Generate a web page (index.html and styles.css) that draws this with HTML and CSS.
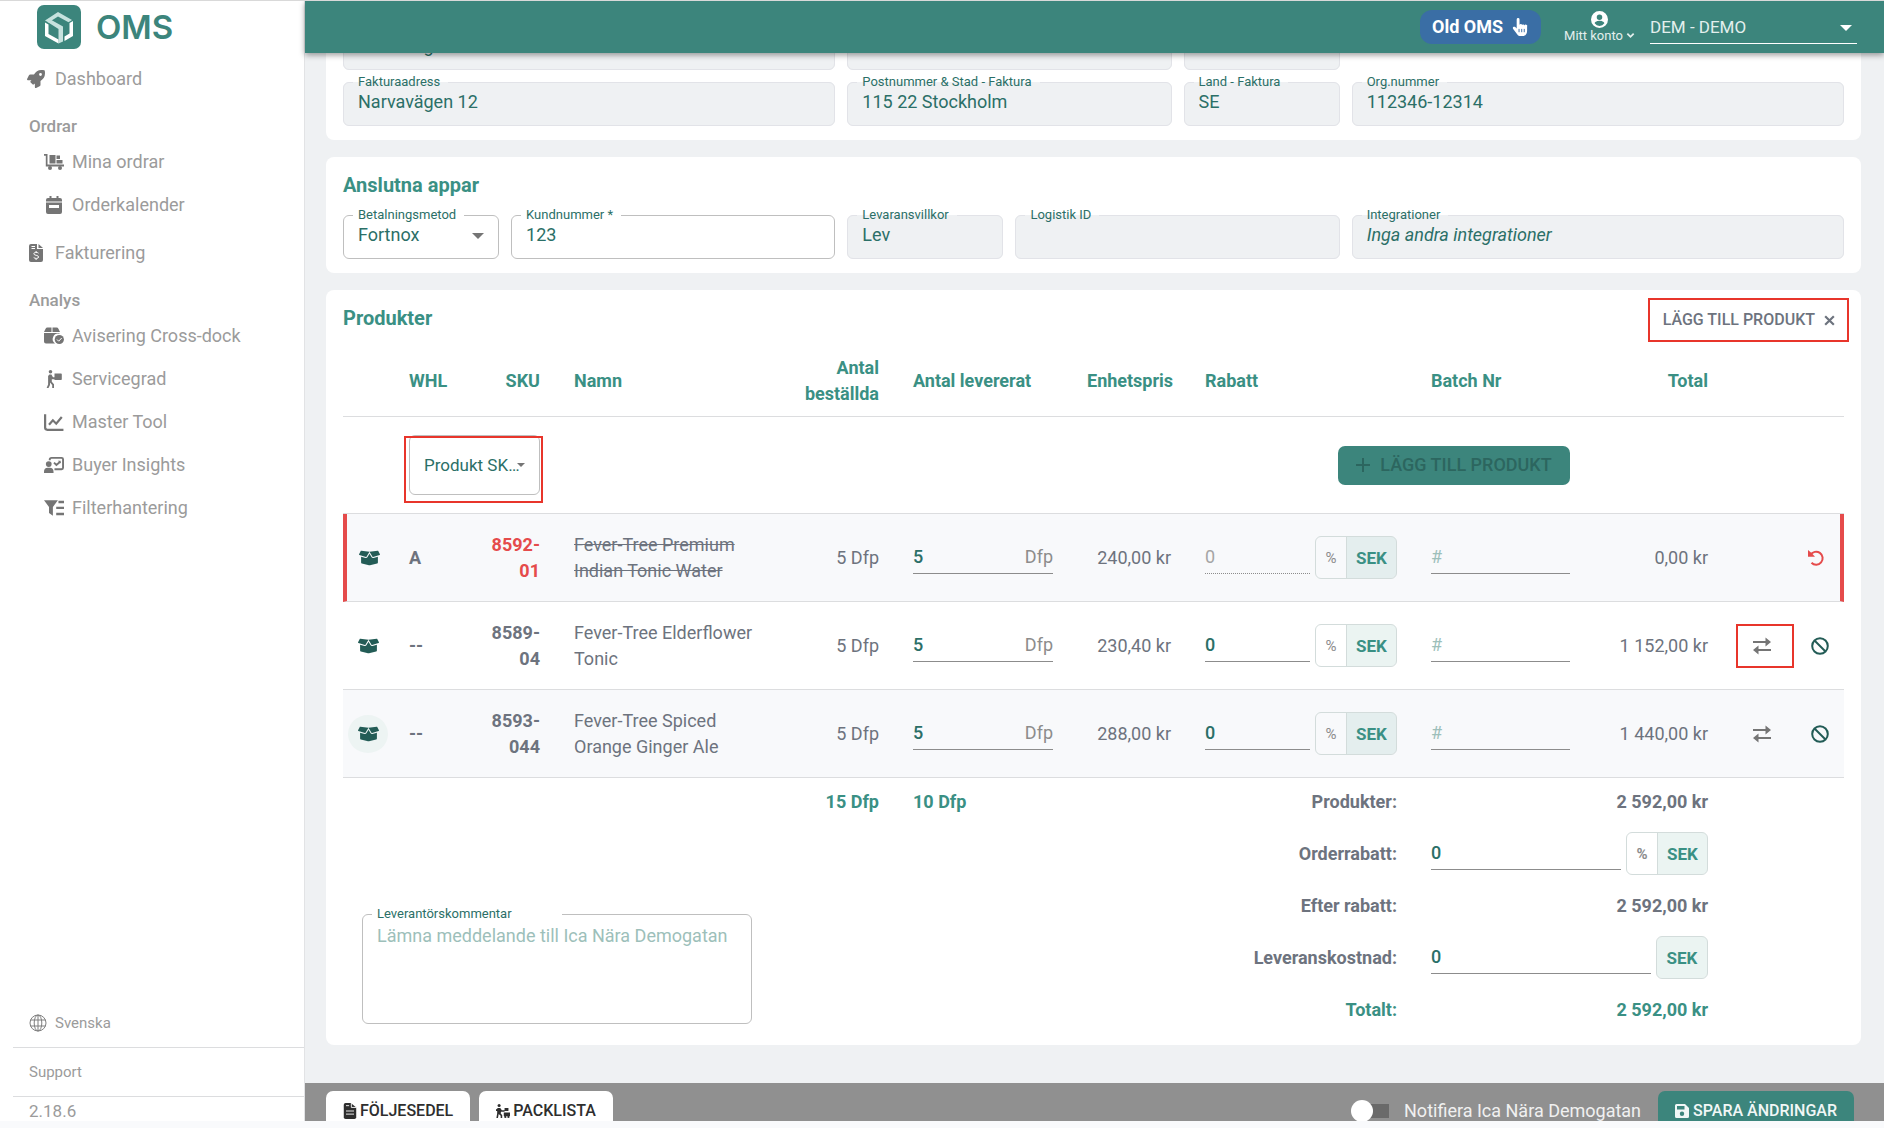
FILE: index.html
```html
<!DOCTYPE html>
<html lang="sv">
<head>
  <meta charset="utf-8">
  <meta name="viewport" content="width=device-width, initial-scale=1">
  <title>OMS - Order</title>
  <link rel="stylesheet" href="styles.css">
</head>
<body>

<svg class="sprite" aria-hidden="true">
  <symbol id="i-rocket" viewBox="0 0 512 512"><path d="M505.1 19.1c-1.2-5.5-6.700-11-12.200-12.200C460.700 0 435.500 0 410.400 0 307.200 0 245.300 55.200 199.100 128H94.800c-16.300 0-35.600 11.900-42.900 26.500L2.500 253.300A28.400 28.400 0 0 0 0 264a24 24 0 0 0 24 24h103.800l-22.500 22.500c-11.400 11.400-13 32.300 0 45.200l50.900 50.900c11.200 11.200 32.200 13.200 45.300 0l22.500-22.500V488a24 24 0 0 0 24 24 28.600 28.600 0 0 0 10.700-2.500l98.700-49.400c14.600-7.300 26.500-26.500 26.500-42.900V312.800c72.600-46.300 128-108.400 128-211.100 .2-25.200 .2-50.400-6.800-82.600ZM384 168a40 40 0 1 1 40-40 40 40 0 0 1-40 40Z"/></symbol>
  <symbol id="i-cart" viewBox="0 0 20 16"><path d="M0 0h3.500v10.500H20v2H1.800V1.800H0zM5.500 1h6v8.500h-6zM12.500 1.500H16V5h-3.500zM12.500 6h6v3.500h-6z"/><circle cx="6" cy="14" r="2"/><circle cx="16" cy="14" r="2"/></symbol>
  <symbol id="i-calendar" viewBox="0 0 16 18"><path fill-rule="evenodd" d="M3.500 0h2v2h5V0h2v2H14a2 2 0 0 1 2 2v1.500H0V4a2 2 0 0 1 2-2h1.500zM0 6.500h16V16a2 2 0 0 1-2 2H2a2 2 0 0 1-2-2zM3 9v3h10V9z"/></symbol>
  <symbol id="i-invoice" viewBox="0 0 14 18"><path d="M2 0h6v5h6v11a2 2 0 0 1-2 2H2a2 2 0 0 1-2-2V2a2 2 0 0 1 2-2zM9.500 0L14 4H9.500z"/><path class="cut" d="M2.500 2.500h3.500M2.500 4.500h3.500M9.500 9.200C8.500 8 4.800 8 4.800 9.800c0 2 4.800 1 4.800 3.200 0 1.800-3.800 1.800-4.900.5M7.100 7v1.500M7.100 14.500V16"/></symbol>
  <symbol id="i-boxcheck" viewBox="0 0 20 17"><path d="M3.500 0h4v4.500H0L1.600 1.200A2 2 0 0 1 3.500 0zM8.500 0h4a2 2 0 0 1 1.900 1.200L16 4.500H8.500zM0 5.500h15.500v.7a5.500 5.500 0 0 0-4.500 9.800H2a2 2 0 0 1-2-2z"/><circle cx="15.300" cy="12" r="4.600"/><path class="cut" d="M13 12l1.700 1.700 3-3.200"/></symbol>
  <symbol id="i-carry" viewBox="0 0 16 18"><circle cx="4.500" cy="1.800" r="1.800"/><path d="M8.500 3.500H15a.8.800 0 0 1 .8.800v4.900a.8.800 0 0 1-.8.800H8.500zM3.400 4.500h2L7 7.300h2v1.900H5.800v2.500L8 14.200V18H6.200v-3L4 12.500V15l-1.500 3H.6l1.500-3.500V6z"/></symbol>
  <symbol id="i-chart" viewBox="0 0 18 16"><path class="line" d="M1 1v12a2 2 0 0 0 2 2h14.500M4.500 10.500L8 6.500l3 3L16 3.500"/></symbol>
  <symbol id="i-teacher" viewBox="0 0 21 17"><path class="line" d="M6 3.500V3a2 2 0 0 1 2-2h10.500a1.500 1.500 0 0 1 1.500 1.500v9a1.500 1.500 0 0 1-1.500 1.500H11M10.500 6l2.500 2.500L17 5"/><circle cx="5" cy="7.500" r="3"/><path d="M0 17v-1.500a4 4 0 0 1 4-4h2a4 4 0 0 1 4 4V17zM14.500 4h3v3z"/></symbol>
  <symbol id="i-filter" viewBox="0 0 18 14"><path d="M0 0h12.500L8 6v8l-3.500-2.500V6zM13 .5h5v2.200h-5zM11 5.800h7V8h-7zM11 11.300h7v2.200h-7z"/></symbol>
  <symbol id="i-globe" viewBox="0 0 18 18"><g class="thin"><circle cx="9" cy="9" r="8"/><ellipse cx="9" cy="9" rx="3.800" ry="8"/><path d="M9 1v16M1.500 6h15M1.500 12h15"/></g></symbol>
  <symbol id="i-hand" viewBox="0 0 16 19"><path d="M4.500 1.500a1.500 1.500 0 0 1 3 0V7a1.500 1.500 0 0 1 2.700.2 1.500 1.500 0 0 1 2.500.6A1.500 1.500 0 0 1 15.500 9v4.500c0 3-1.500 5.500-4.500 5.500H8.500c-1.500 0-2.500-.6-3.300-1.700L.8 11.500c-1.200-1.700.8-3.200 2.200-1.900l1.500 1.500z"/><path class="cut" d="M7 11.500v3.500M9.800 11.500v3.500M12.500 11.500v3.500"/></symbol>
  <symbol id="i-user" viewBox="0 0 20 20"><path fill-rule="evenodd" d="M10 0a10 10 0 1 0 0 20 10 10 0 0 0 0-20zm0 4a3.200 3.200 0 1 1 0 6.500A3.200 3.200 0 0 1 10 4zm0 13.500a7 7 0 0 1-5.700-3c0-1.900 3.800-2.900 5.700-2.900s5.700 1 5.700 2.900a7 7 0 0 1-5.700 3z"/></symbol>
  <symbol id="i-chevron" viewBox="0 0 10 10"><path class="line" d="M1.500 3L5 6.500 8.500 3"/></symbol>
  <symbol id="i-close" viewBox="0 0 12 12"><path class="line" d="M2 2l8 8M10 2l-8 8"/></symbol>
  <symbol id="i-plus" viewBox="0 0 14 14"><path class="line" d="M7 0v14M0 7h14"/></symbol>
  <symbol id="i-box" viewBox="0 0 640 512"><path d="M425.700 256c-16.900 0-32.800-9-41.400-23.400L320 126l-64.200 106.600c-8.700 14.500-24.600 23.500-41.500 23.500-4.500 0-9-.6-13.300-1.900L64 215v178c0 14.700 10 27.500 24.200 31l216.200 54.100c10.200 2.500 20.900 2.500 31 0L551.800 424c14.200-3.600 24.200-16.400 24.200-31V215l-137 39.100c-4.300 1.300-8.800 1.900-13.300 1.900zm212.600-112.200L586.800 41c-3.100-6.200-9.800-9.800-16.700-8.900L320 64l91.700 152.100c3.800 6.300 11.400 9.300 18.500 7.300l197.900-56.500c9.900-2.900 14.700-13.900 10.200-23.100zM53.200 41L1.700 143.800c-4.600 9.200.3 20.200 10.100 23l197.900 56.500c7.100 2 14.700-1 18.500-7.300L320 64 69.800 32.100c-6.900-.8-13.500 2.700-16.600 8.900z"/></symbol>
  <symbol id="i-swap" viewBox="0 0 18 18"><path class="line" d="M0 5h14M4 13h14"/><path d="M12.500 .5L18 5l-5.500 4.500zM5.500 8.500L0 13l5.500 4.500z"/></symbol>
  <symbol id="i-ban" viewBox="0 0 18 18"><path class="line" d="M3.500 3.500l11 11"/><circle class="line" cx="9" cy="9" r="7.800"/></symbol>
  <symbol id="i-undo" viewBox="0 0 16 16"><path class="line" d="M2.500 5A6.500 6.500 0 1 1 3.500 12.800"/><path d="M0 0l1.800 1.500L3.500 3l3.500 3.800H0z"/></symbol>
  <symbol id="i-note" viewBox="0 0 14 18"><path d="M2 0h6l6 5v11a2 2 0 0 1-2 2H2a2 2 0 0 1-2-2V2a2 2 0 0 1 2-2z"/><path class="cut" d="M8.500 0v5H14M2.500 3H6M2.500 9h9M2.500 12.500h9"/></symbol>
  <symbol id="i-pack" viewBox="0 0 18 18"><circle cx="4" cy="2" r="2"/><path d="M2.500 5h3l2 3H11v2H6.500l-.5 2 2 2.500V18H6v-3l-2.500-2-1 5H.5l1-6V9H0V7zM11 5h5v4h-5zM10 11h8v4.500h-8z"/><circle cx="12" cy="16.500" r="1.500"/><circle cx="16" cy="16.500" r="1.500"/></symbol>
  <symbol id="i-save" viewBox="0 0 14 14"><path fill-rule="evenodd" d="M1.500 0H10l4 4v8.500a1.500 1.500 0 0 1-1.500 1.500h-11A1.500 1.500 0 0 1 0 12.500v-11A1.500 1.500 0 0 1 1.500 0zM2 2v3.500h7.500V2zM7 7.500a2.200 2.200 0 1 0 0 4.400 2.200 2.200 0 0 0 0-4.400z"/></symbol>
</svg>

<div class="app">
  <aside class="sidebar">
    <a class="brand" href="#">
      <svg class="brand__logo" viewBox="0 0 44 44">
        <rect width="44" height="44" rx="7" fill="#3c857c"/>
        <path d="M8 15.500l13-8.500 14 8-3.500 2.200-10.500-5.700-9.500 6z" fill="#c6e2de"/>
        <path d="M13.500 14.500l12.500 7v15l-4.500 2V24l-11-7z" fill="#c6e2de"/>
        <path d="M8 17.500l3.500 2v9.500l10 5.500v4L8 31zM36 16v15l-8.500 5v-4.500l5-3V18z" fill="#fff"/>
      </svg>
      <span>OMS</span>
    </a>
    <nav class="nav">
      <a class="nav__item" href="#"><svg class="icon"><use href="#i-rocket"/></svg>Dashboard</a>
      <h2 class="nav__head">Ordrar</h2>
      <a class="nav__item nav__item--sub" href="#"><svg class="icon"><use href="#i-cart"/></svg>Mina ordrar</a>
      <a class="nav__item nav__item--sub" href="#"><svg class="icon"><use href="#i-calendar"/></svg>Orderkalender</a>
      <a class="nav__item nav__item--gap" href="#"><svg class="icon"><use href="#i-invoice"/></svg>Fakturering</a>
      <h2 class="nav__head">Analys</h2>
      <a class="nav__item nav__item--sub" href="#"><svg class="icon"><use href="#i-boxcheck"/></svg>Avisering Cross-dock</a>
      <a class="nav__item nav__item--sub" href="#"><svg class="icon"><use href="#i-carry"/></svg>Servicegrad</a>
      <a class="nav__item nav__item--sub" href="#"><svg class="icon"><use href="#i-chart"/></svg>Master Tool</a>
      <a class="nav__item nav__item--sub" href="#"><svg class="icon"><use href="#i-teacher"/></svg>Buyer Insights</a>
      <a class="nav__item nav__item--sub" href="#"><svg class="icon"><use href="#i-filter"/></svg>Filterhantering</a>
    </nav>
    <div class="sidebar__foot">
      <a class="nav__foot" href="#"><svg class="icon"><use href="#i-globe"/></svg>Svenska</a>
      <a class="nav__foot" href="#">Support</a>
      <span class="version">2.18.6</span>
    </div>
  </aside>

  <div class="main">
    <header class="topbar">
      <button class="old-btn" type="button">Old OMS <svg class="icon"><use href="#i-hand"/></svg></button>
      <button class="account" type="button">
        <svg class="account__icon"><use href="#i-user"/></svg>
        <span class="account__text">Mitt konto <svg class="chevron"><use href="#i-chevron"/></svg></span>
      </button>
      <div class="select select--top">
        <select aria-label="Leverantör"><option>DEM - DEMO</option></select>
      </div>
    </header>

    <main class="content">
      <section class="card card--address">
        <div class="fields">
          <fieldset class="field field--3 is-readonly">
            <legend><label for="lev-adress">Leveransadress</label></legend>
            <input id="lev-adress" type="text" value="Narvavägen 12" readonly>
          </fieldset>
          <fieldset class="field field--2 is-readonly">
            <legend><label for="lev-post">Postnummer &amp; Stad</label></legend>
            <input id="lev-post" type="text" value="115 22 Stockholm" readonly>
          </fieldset>
          <fieldset class="field is-readonly">
            <legend><label for="lev-land">Land</label></legend>
            <input id="lev-land" type="text" value="SE" readonly>
          </fieldset>
        </div>
        <div class="fields">
          <fieldset class="field field--3 is-readonly">
            <legend><label for="fak-adress">Fakturaadress</label></legend>
            <input id="fak-adress" type="text" value="Narvavägen 12" readonly>
          </fieldset>
          <fieldset class="field field--2 is-readonly">
            <legend><label for="fak-post">Postnummer &amp; Stad - Faktura</label></legend>
            <input id="fak-post" type="text" value="115 22 Stockholm" readonly>
          </fieldset>
          <fieldset class="field is-readonly">
            <legend><label for="fak-land">Land - Faktura</label></legend>
            <input id="fak-land" type="text" value="SE" readonly>
          </fieldset>
          <fieldset class="field field--3 is-readonly">
            <legend><label for="orgnr">Org.nummer</label></legend>
            <input id="orgnr" type="text" value="112346-12314" readonly>
          </fieldset>
        </div>
      </section>

      <section class="card card--apps">
        <h2 class="card__title">Anslutna appar</h2>
        <div class="fields">
          <fieldset class="field">
            <legend><label for="betalning">Betalningsmetod</label></legend>
            <div class="select">
              <select id="betalning"><option>Fortnox</option></select>
            </div>
          </fieldset>
          <fieldset class="field field--2">
            <legend><label for="kundnr">Kundnummer *</label></legend>
            <input id="kundnr" type="text" value="123">
          </fieldset>
          <fieldset class="field is-readonly">
            <legend><label for="levvillkor">Levaransvillkor</label></legend>
            <input id="levvillkor" type="text" value="Lev" readonly>
          </fieldset>
          <fieldset class="field field--2 is-readonly">
            <legend><label for="logistik">Logistik ID</label></legend>
            <input id="logistik" type="text" value="" readonly>
          </fieldset>
          <fieldset class="field field--3 is-readonly">
            <legend><label for="integrationer">Integrationer</label></legend>
            <input id="integrationer" class="italic" type="text" value="Inga andra integrationer" readonly>
          </fieldset>
        </div>
      </section>

      <section class="card card--products">
        <div class="card__head">
          <h2 class="card__title">Produkter</h2>
          <button class="add-toggle marked" type="button">LÄGG TILL PRODUKT <svg class="icon"><use href="#i-close"/></svg></button>
        </div>

        <table class="products">
          <colgroup>
            <col class="c-icon"><col class="c-whl"><col class="c-sku"><col class="c-name"><col class="c-ordered">
            <col class="c-delivered"><col class="c-price"><col class="c-discount"><col class="c-batch"><col class="c-total"><col class="c-actions">
          </colgroup>
          <thead>
            <tr>
              <th></th>
              <th>WHL</th>
              <th class="right">SKU</th>
              <th>Namn</th>
              <th class="right">Antal beställda</th>
              <th>Antal levererat</th>
              <th class="right">Enhetspris</th>
              <th>Rabatt</th>
              <th>Batch Nr</th>
              <th class="right">Total</th>
              <th></th>
            </tr>
          </thead>
          <tbody>
            <tr class="add-row">
              <td></td>
              <td colspan="2">
                <div class="select select--sku">
                  <select aria-label="Produkt SKU"><option>Produkt SK…</option></select>
                  <span class="mark"></span>
                </div>
              </td>
              <td colspan="3"></td>
              <td class="right" colspan="3">
                <button class="btn btn--add" type="button" disabled><svg class="icon"><use href="#i-plus"/></svg>LÄGG TILL PRODUKT</button>
              </td>
              <td colspan="2"></td>
            </tr>
            <tr class="item item--removed">
              <td class="box-cell"><button class="box-btn" type="button" aria-label="Visa lager"><svg class="icon"><use href="#i-box"/></svg></button></td>
              <td class="strong">A</td>
              <td class="strong right sku">8592-01</td>
              <td class="name">Fever-Tree Premium Indian Tonic Water</td>
              <td class="right">5 Dfp</td>
              <td><div class="line-input"><input type="text" value="5" aria-label="Antal levererat"><span>Dfp</span></div></td>
              <td class="right">240,00 kr</td>
              <td>
                <div class="discount">
                  <div class="line-input is-disabled"><input type="text" value="0" aria-label="Rabatt" disabled></div>
                  <div class="toggle"><button type="button">%</button><button class="on" type="button">SEK</button></div>
                </div>
              </td>
              <td><div class="line-input"><input type="text" placeholder="#" aria-label="Batch Nr"></div></td>
              <td class="right">0,00 kr</td>
              <td class="actions">
                <div class="actions__row">
                  <button class="act act--undo" type="button" aria-label="Ångra"><svg class="icon"><use href="#i-undo"/></svg></button>
                </div>
              </td>
            </tr>
            <tr class="item">
              <td class="box-cell"><button class="box-btn" type="button" aria-label="Visa lager"><svg class="icon"><use href="#i-box"/></svg></button></td>
              <td class="strong">--</td>
              <td class="strong right sku">8589-04</td>
              <td class="name">Fever-Tree Elderflower Tonic</td>
              <td class="right">5 Dfp</td>
              <td><div class="line-input"><input type="text" value="5" aria-label="Antal levererat"><span>Dfp</span></div></td>
              <td class="right">230,40 kr</td>
              <td>
                <div class="discount">
                  <div class="line-input"><input type="text" value="0" aria-label="Rabatt"></div>
                  <div class="toggle"><button type="button">%</button><button class="on" type="button">SEK</button></div>
                </div>
              </td>
              <td><div class="line-input"><input type="text" placeholder="#" aria-label="Batch Nr"></div></td>
              <td class="right">1 152,00 kr</td>
              <td class="actions">
                <div class="actions__row">
                  <button class="act act--swap marked" type="button" aria-label="Byt produkt"><svg class="icon"><use href="#i-swap"/></svg></button>
                  <button class="act" type="button" aria-label="Ta bort"><svg class="icon"><use href="#i-ban"/></svg></button>
                </div>
              </td>
            </tr>
            <tr class="item">
              <td class="box-cell"><button class="box-btn is-hover" type="button" aria-label="Visa lager"><svg class="icon"><use href="#i-box"/></svg></button></td>
              <td class="strong">--</td>
              <td class="strong right sku">8593-044</td>
              <td class="name">Fever-Tree Spiced Orange Ginger Ale</td>
              <td class="right">5 Dfp</td>
              <td><div class="line-input"><input type="text" value="5" aria-label="Antal levererat"><span>Dfp</span></div></td>
              <td class="right">288,00 kr</td>
              <td>
                <div class="discount">
                  <div class="line-input"><input type="text" value="0" aria-label="Rabatt"></div>
                  <div class="toggle"><button type="button">%</button><button class="on" type="button">SEK</button></div>
                </div>
              </td>
              <td><div class="line-input"><input type="text" placeholder="#" aria-label="Batch Nr"></div></td>
              <td class="right">1 440,00 kr</td>
              <td class="actions">
                <div class="actions__row">
                  <button class="act act--swap" type="button" aria-label="Byt produkt"><svg class="icon"><use href="#i-swap"/></svg></button>
                  <button class="act" type="button" aria-label="Ta bort"><svg class="icon"><use href="#i-ban"/></svg></button>
                </div>
              </td>
            </tr>
          </tbody>
          <tfoot>
            <tr class="sum">
              <td colspan="4"></td>
              <td class="right green">15 Dfp</td>
              <td class="green">10 Dfp</td>
              <td class="right" colspan="2">Produkter:</td>
              <td class="right" colspan="2">2 592,00 kr</td>
              <td></td>
            </tr>
            <tr class="sum sum--input">
              <td class="comment-cell" colspan="4" rowspan="4">
                <fieldset class="field field--comment">
                  <legend><label for="kommentar">Leverantörskommentar</label></legend>
                  <textarea id="kommentar" placeholder="Lämna meddelande till Ica Nära Demogatan"></textarea>
                </fieldset>
              </td>
              <td colspan="2"></td>
              <td class="right" colspan="2"><label for="orderrabatt">Orderrabatt:</label></td>
              <td colspan="2">
                <div class="discount">
                  <div class="line-input"><input id="orderrabatt" type="text" value="0"></div>
                  <div class="toggle"><button type="button">%</button><button class="on" type="button">SEK</button></div>
                </div>
              </td>
              <td></td>
            </tr>
            <tr class="sum">
              <td colspan="2"></td>
              <td class="right" colspan="2">Efter rabatt:</td>
              <td class="right" colspan="2">2 592,00 kr</td>
              <td></td>
            </tr>
            <tr class="sum sum--input">
              <td colspan="2"></td>
              <td class="right" colspan="2"><label for="leverans">Leveranskostnad:</label></td>
              <td colspan="2">
                <div class="discount">
                  <div class="line-input"><input id="leverans" type="text" value="0"></div>
                  <div class="toggle"><button class="on" type="button">SEK</button></div>
                </div>
              </td>
              <td></td>
            </tr>
            <tr class="sum">
              <td colspan="2"></td>
              <td class="right green" colspan="2">Totalt:</td>
              <td class="right green" colspan="2">2 592,00 kr</td>
              <td></td>
            </tr>
          </tfoot>
        </table>
      </section>
    </main>

    <footer class="actionbar">
      <button class="btn btn--white" type="button"><svg class="icon"><use href="#i-note"/></svg>FÖLJESEDEL</button>
      <button class="btn btn--white" type="button"><svg class="icon"><use href="#i-pack"/></svg>PACKLISTA</button>
      <label class="switch"><input type="checkbox"><span>Notifiera Ica Nära Demogatan</span></label>
      <button class="btn btn--save" type="button"><svg class="icon"><use href="#i-save"/></svg>SPARA ÄNDRINGAR</button>
    </footer>
  </div>
</div>

</body>
</html>
```
FILE: styles.css
```css
* {
	box-sizing: border-box;
}

:root {
	--primary: #3c857c;
	--heading: #3a9084;
	--value: #2b6f67;
	--text: #6d737e;
	--muted: #9b9b9b;
	--line: #dcdddf;
	--page: #eff1f3;
	--mark: #e8352b;
}

body {
	margin: 0;
	height: 100vh;
	padding-bottom: 7px;
	border-top: 1px solid #d9d9d9;
	background: #f9fafc;
	font-family: Roboto, "Liberation Sans", sans-serif;
	font-size: 18px;
	line-height: 26px;
	color: var(--text);
	overflow: hidden;
}

button,
input,
select,
textarea {
	font: inherit;
	color: inherit;
	background: none;
	border: 0;
	padding: 0;
	margin: 0;
	outline: 0;
	border-radius: 0;
}

a {
	color: inherit;
	text-decoration: none;
}

h2 {
	margin: 0;
	font-size: inherit;
}

.sprite {
	position: absolute;
	width: 0;
	height: 0;
}

.icon {
	width: 18px;
	height: 18px;
	flex: none;
	fill: currentColor;
}

.line {
	fill: none;
	stroke: currentColor;
	stroke-width: 2;
}

.thin {
	fill: none;
	stroke: currentColor;
	stroke-width: 1;
}

.cut {
	fill: none;
	stroke: var(--cut, #fff);
	stroke-width: 1;
}

.app {
	display: flex;
	height: 100%;
}

/* Sidebar */
.sidebar {
	flex: none;
	width: 305px;
	padding-left: 13px;
	display: flex;
	flex-direction: column;
	overflow: hidden;
	background: #fff;
	border-right: 1px solid #e2e3e5;
	color: var(--muted);
}

.brand {
	display: flex;
	align-items: center;
	gap: 15px;
	padding: 4px 0 0 24px;
	height: 48px;
	font: 600 33px/44px Inter, sans-serif;
	color: var(--primary);
}

.brand__logo {
	width: 44px;
	height: 44px;
}

.nav {
	padding: 8px 0 0 14px;
}

.nav__item {
	display: flex;
	align-items: center;
	gap: 10px;
	height: 43px;
}

.nav__item--sub {
	padding-left: 17px;
	gap: 8px;
}

.nav__item .icon {
	color: #757575;
}

.nav__item--sub .icon {
	width: 20px;
}

.nav__item--gap {
	margin-top: 5px;
}

.nav__head {
	margin-top: 12px;
	padding-left: 2px;
	font-size: 17px;
	font-weight: 500;
	line-height: 28px;
}

.sidebar__foot {
	margin-top: auto;
	height: 122px;
	flex: none;
}

.nav__foot {
	display: flex;
	align-items: center;
	gap: 8px;
	height: 49px;
	padding-left: 16px;
	font-size: 15px;
	border-bottom: 1px solid var(--line);
}

.nav__foot .icon {
	color: #7f7f7f;
}

.version {
	display: block;
	padding: 4px 0 0 16px;
	font-size: 17px;
	line-height: 20px;
}

/* Top bar */
.main {
	flex: 1;
	min-width: 0;
	display: flex;
	flex-direction: column;
}

.topbar {
	position: relative;
	z-index: 1;
	flex: none;
	display: flex;
	align-items: center;
	justify-content: flex-end;
	height: 52px;
	padding-right: 27px;
	background: var(--primary);
	color: #fff;
	box-shadow: 0 2px 6px rgba(0, 0, 0, 0.4);
}

.old-btn {
	--cut: #3a6ea5;
	display: flex;
	align-items: center;
	gap: 8px;
	height: 34px;
	padding: 0 12px;
	border-radius: 12px;
	background: #3a6ea5;
	font-weight: 700;
}

.account {
	display: flex;
	flex-direction: column;
	align-items: center;
	margin: 0 15px 0 23px;
	font-size: 13px;
	line-height: 16px;
	color: #e3efed;
}

.account__icon {
	width: 17px;
	height: 17px;
	fill: #fff;
}

.account__text {
	display: flex;
	align-items: center;
	gap: 3px;
}

.chevron {
	width: 9px;
	height: 9px;
}

/* Drop-downs */
.select {
	position: relative;
}

.select select {
	display: block;
	width: 100%;
	height: 100%;
	appearance: none;
}

.select::after {
	content: '';
	position: absolute;
	top: 50%;
	right: 5px;
	margin-top: -2px;
	border: 6px solid transparent;
	border-top-color: #757575;
	border-bottom: 0;
	pointer-events: none;
}

.select--top {
	width: 207px;
	height: 34px;
	border-bottom: 1px solid #fff;
	font-size: 17px;
	color: #e3efed;
}

.select--top::after {
	border-top-color: #fff;
}

.select--sku {
	height: 60px;
	border: 1px solid #bfbfbf;
	border-radius: 6px;
	font-size: 17px;
	color: var(--value);
}

.select--sku select {
	padding-left: 14px;
}

.select--sku::after {
	right: 14px;
	border-width: 4px 4px 0;
}

/* Cards */
.content {
	flex: 1;
	min-height: 0;
	display: flex;
	flex-direction: column;
	justify-content: flex-end;
	gap: 17px;
	padding: 0 23px 38px 21px;
	background: var(--page);
	overflow: hidden;
}

.card {
	flex: none;
	padding: 14px 17px;
	border-radius: 8px;
	background: #fff;
}

.card--address {
	display: flex;
	flex-direction: column;
	gap: 5px;
}

.card--products {
	padding-top: 8px;
	padding-bottom: 12px;
}

.card__title {
	font-size: 20px;
	font-weight: 700;
	line-height: 28px;
	color: var(--heading);
}

.card--apps .card__title {
	margin-bottom: 9px;
}

.card__head {
	display: flex;
	justify-content: space-between;
	align-items: flex-start;
	height: 48px;
}

.card__head .card__title {
	margin-top: 6px;
}

.fields {
	display: grid;
	grid-template-columns: repeat(9, 1fr);
	gap: 12px;
}

.field {
	min-width: 0;
	height: 51px;
	margin: 0;
	padding: 0 9px;
	border: 1px solid #bfbfbf;
	border-radius: 6px;
	color: var(--value);
}

.field--2 {
	grid-column: span 2;
}

.field--3 {
	grid-column: span 3;
}

.field legend {
	padding: 0 8px 0 5px;
	font-size: 13px;
	line-height: 14px;
}

.field legend label {
	display: block;
}

.field input,
.field select {
	display: block;
	width: 100%;
	height: 26px;
	padding-left: 5px;
}

.is-readonly {
	border-color: #e2e3e8;
	background: var(--page);
}

.italic {
	font-style: italic;
}

/* Red frames around the new controls */
.marked {
	border: 2px solid var(--mark);
}

.mark {
	position: absolute;
	inset: 0 -4px -9px -6px;
	border: 2px solid var(--mark);
	pointer-events: none;
}

.add-toggle {
	display: flex;
	align-items: center;
	gap: 8px;
	height: 44px;
	margin-right: -5px;
	padding: 0 11px 0 13px;
	font-size: 16px;
	font-weight: 500;
}

.add-toggle .icon {
	width: 13px;
	height: 13px;
}

/* Product table */
.products {
	width: 100%;
	table-layout: fixed;
	border-collapse: separate;
	border-spacing: 0;
}

.c-icon { width: 49px; }
.c-whl { width: 71px; }
.c-sku { width: 94px; }
.c-ordered { width: 124px; }
.c-delivered { width: 174px; }
.c-price { width: 118px; }
.c-discount { width: 226px; }
.c-batch { width: 173px; }
.c-total { width: 138px; }
.c-actions { width: 119px; }

.products th,
.products td {
	padding: 0 17px;
	text-align: left;
	border-bottom: 1px solid var(--line);
}

.products th {
	height: 71px;
	font-weight: 700;
	color: var(--heading);
}

.products .right {
	text-align: right;
}

.add-row td {
	height: 97px;
}

.item td {
	height: 88px;
}

.item:nth-child(even) td {
	background: #f8f9fb;
}

.products .box-cell {
	padding: 0 5px;
}

.strong {
	font-weight: 700;
}

.item--removed td:first-child {
	padding-left: 2px;
	border-left: 4px solid #e54b4b;
}

.item--removed td:last-child {
	border-right: 4px solid #e54b4b;
}

.item--removed .sku {
	color: #e54b4b;
}

.item--removed .name {
	text-decoration: line-through;
}

.box-btn {
	display: flex;
	align-items: center;
	justify-content: center;
	width: 40px;
	height: 38px;
	border-radius: 50%;
	color: #235c56;
}

.box-btn.is-hover {
	background: #edf4f3;
}

.box-btn .icon {
	width: 21px;
}

.line-input {
	flex: 1;
	min-width: 0;
	display: flex;
	align-items: center;
	height: 33px;
	border-bottom: 1px solid #8c8c8c;
}

.line-input input {
	flex: 1;
	min-width: 0;
	width: 100%;
	height: 26px;
	font-weight: 500;
	color: var(--value);
}

.line-input input::placeholder {
	font-weight: 400;
	color: #9dbfba;
}

.line-input span {
	color: #8c8c8c;
}

.line-input.is-disabled {
	border-bottom-style: dotted;
}

.line-input.is-disabled input {
	font-weight: 400;
	color: #a5a5a5;
}

.discount {
	display: flex;
	align-items: center;
	gap: 5px;
}

.toggle {
	flex: none;
	display: flex;
	height: 43px;
	border: 1px solid #d3dcdb;
	border-radius: 6px;
	overflow: hidden;
}

.toggle button {
	width: 30px;
	font-size: 15px;
	color: #8c8c8c;
}

.toggle .on {
	width: 50px;
	border-left: 1px solid #d3dcdb;
	background: rgba(60, 144, 132, 0.1);
	font-size: 17px;
	font-weight: 700;
	color: var(--heading);
}

.toggle .on:first-child {
	border-left: 0;
}

.products .actions {
	padding: 0;
}

.actions__row {
	display: flex;
	align-items: center;
	justify-content: flex-end;
	gap: 2px;
}

.act {
	display: flex;
	align-items: center;
	justify-content: center;
	width: 48px;
	height: 44px;
	color: #235c56;
}

.act--swap {
	width: 58px;
	padding-right: 6px;
	color: #757575;
}

.act--undo {
	color: #e54b4b;
}

.act--undo .icon {
	width: 16px;
	height: 16px;
}

/* Sums */
.products .sum td {
	height: 47px;
	border: 0;
	font-weight: 700;
}

.products .sum--input td {
	height: 57px;
}

.products .green {
	color: var(--heading);
}

.products .comment-cell {
	padding: 0 20px 9px 19px;
	vertical-align: bottom;
}

.field--comment {
	height: 117px;
	font-weight: 400;
}

.field--comment legend {
	padding-right: 50px;
}

.field textarea {
	display: block;
	width: 100%;
	height: 92px;
	padding: 2px 5px;
	resize: none;
}

.field textarea::placeholder {
	color: #9dbfba;
}

/* Buttons */
.btn {
	display: inline-flex;
	align-items: center;
	justify-content: center;
	height: 39px;
	border-radius: 7px;
	font-weight: 500;
}

.btn--add {
	gap: 10px;
	width: 232px;
	background: var(--primary);
	color: #2c665f;
	vertical-align: middle;
}

.btn--add .icon {
	width: 14px;
	height: 14px;
}

/* Bottom bar */
.actionbar {
	flex: none;
	display: flex;
	align-items: flex-start;
	gap: 9px;
	height: 38px;
	padding: 8px 30px 0 21px;
	background: #909090;
	overflow: hidden;
}

.btn--white {
	gap: 3px;
	padding: 0 17px;
	background: #fff;
	font-size: 16px;
	color: #2e2e2e;
}

.btn--white .icon {
	width: 14px;
	height: 16px;
}

.btn--save {
	gap: 4px;
	margin-left: 8px;
	padding: 0 17px;
	background: var(--primary);
	font-size: 16px;
	color: #f1f7f6;
}

.btn--save .icon {
	width: 14px;
	height: 14px;
}

.switch {
	display: flex;
	align-items: center;
	gap: 12px;
	height: 39px;
	margin-left: auto;
	color: #f0f0f0;
}

.switch input {
	appearance: none;
	display: flex;
	align-items: center;
	width: 41px;
	height: 22px;
	background: linear-gradient(#6a6a6a, #6a6a6a) center / 35px 14px no-repeat;
	border-radius: 11px;
}

.switch input::before {
	content: '';
	width: 22px;
	height: 22px;
	border-radius: 50%;
	background: #fff;
}
```
